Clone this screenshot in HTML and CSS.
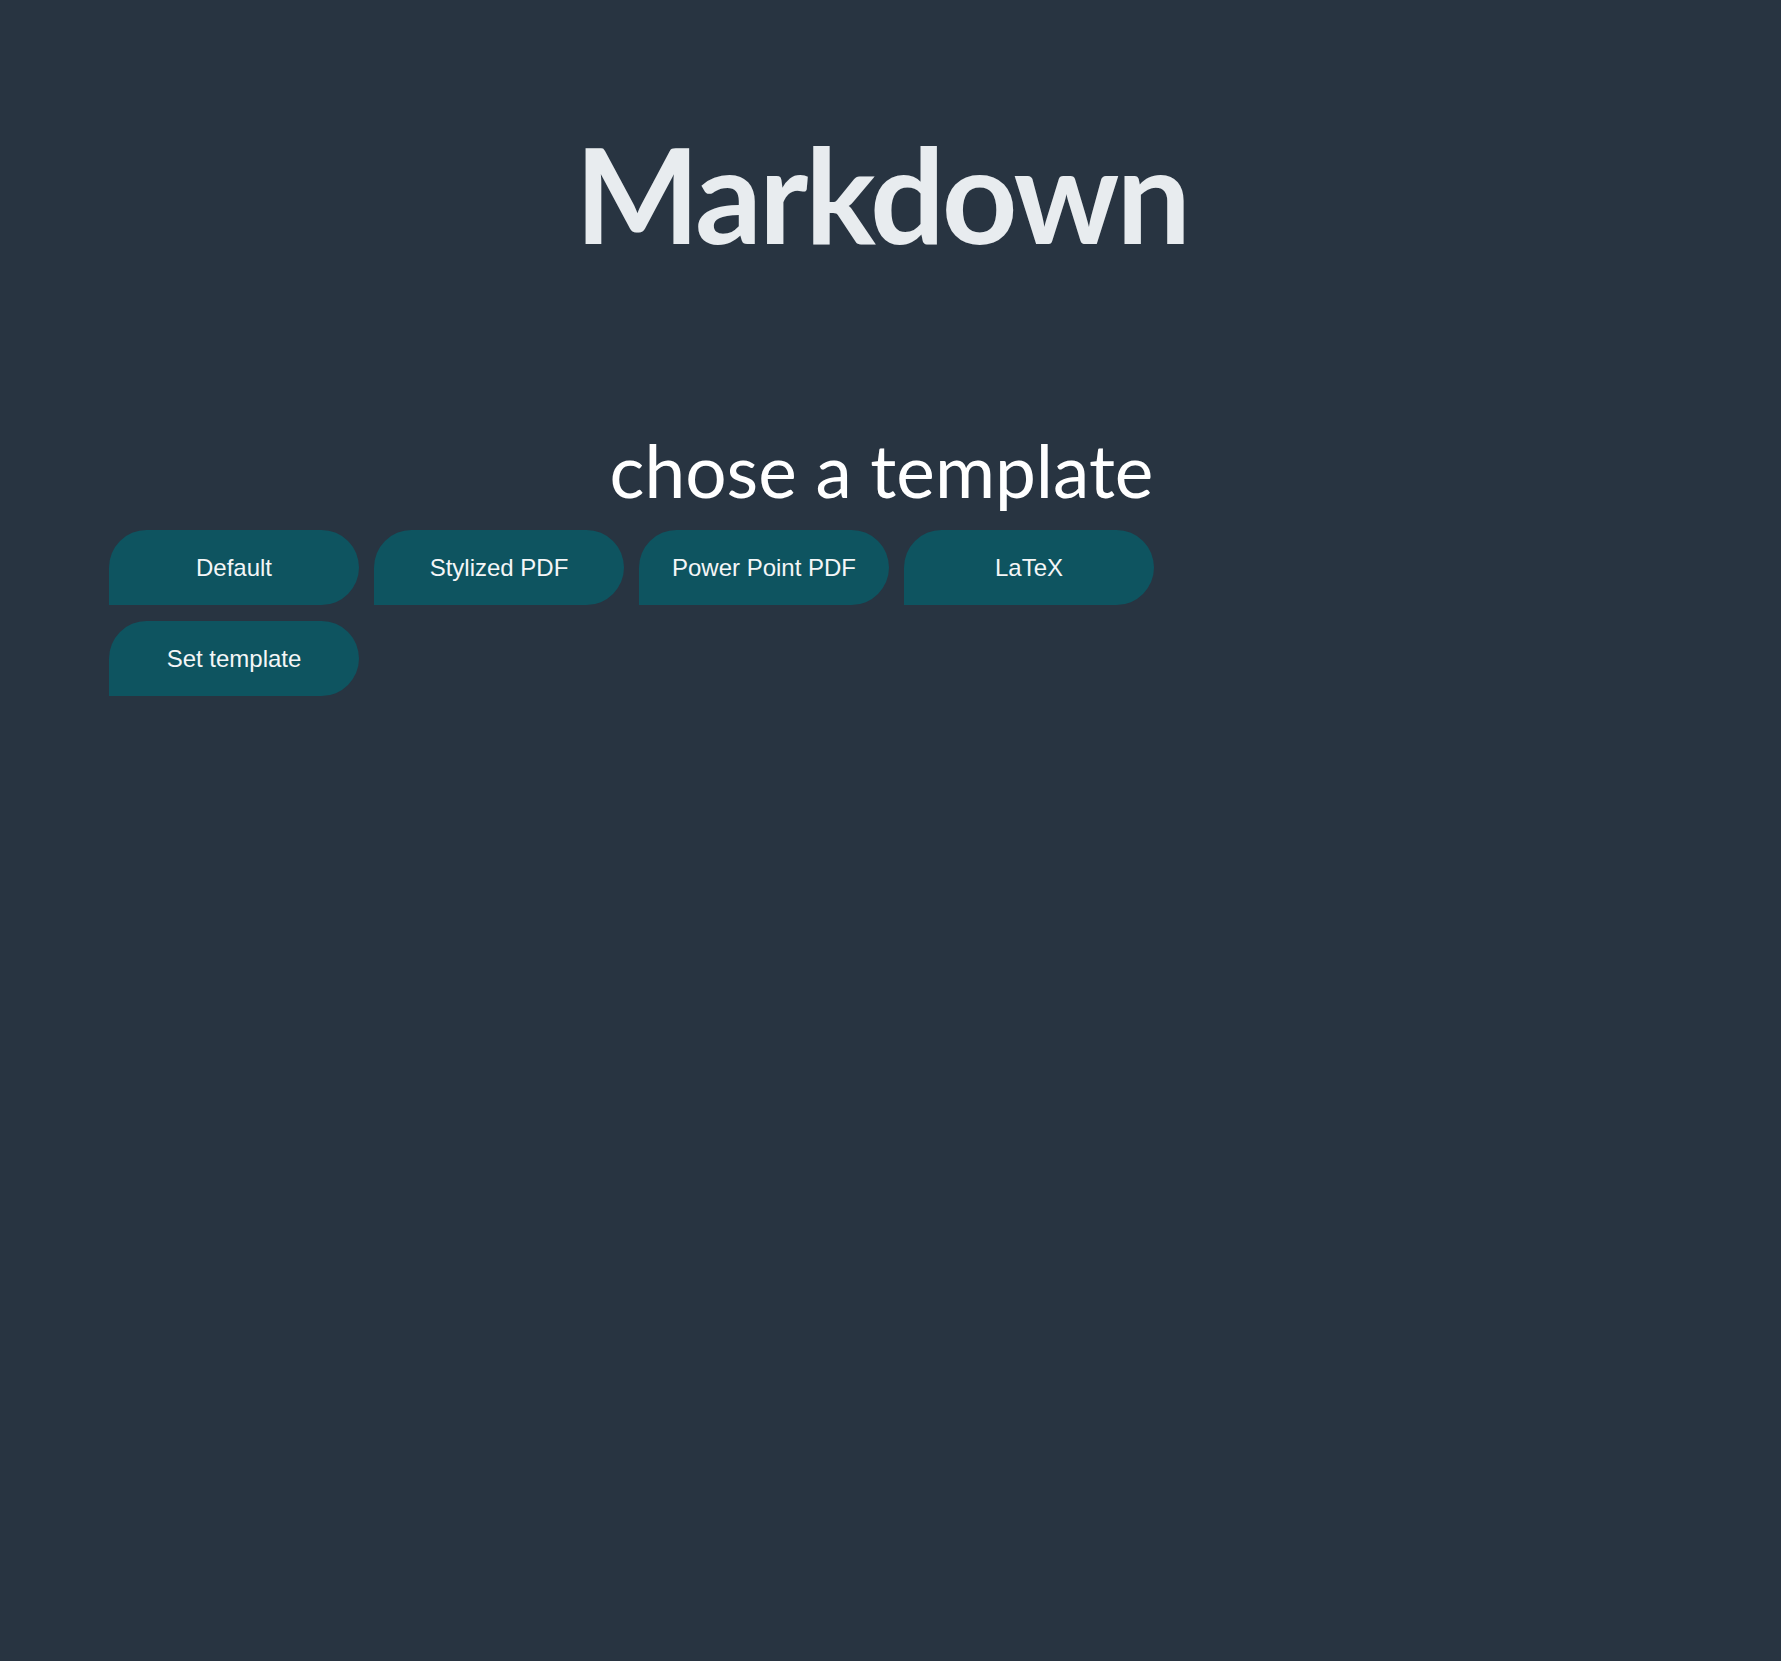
FILE: index.html
```html
<!DOCTYPE html>
<html lang="en">
<head>
<meta charset="utf-8">
<title>Markdown</title>
<link rel="stylesheet" href="styles.css">
</head>
<body>
<main class="page">
  <header class="hero">
    <h1 class="title">Markdown</h1>
  </header>
  <section class="chooser">
    <h2 class="subtitle">chose a template</h2>
    <div class="options">
      <button class="pill">Default</button>
      <button class="pill">Stylized PDF</button>
      <button class="pill">Power Point PDF</button>
      <button class="pill">LaTeX</button>
    </div>
    <div class="actions">
      <button class="pill">Set template</button>
    </div>
  </section>
</main>
</body>
</html>
```

FILE: styles.css
```css
html, body {
  margin: 0;
  padding: 0;
  background: #283441;
  min-height: 100%;
}
body {
  padding: 8px;
  font-family: "Liberation Sans", Arial, sans-serif;
}
.page {
  display: flex;
  flex-direction: column;
}
.hero {
  display: flex;
  justify-content: center;
  padding-right: 18px;
  padding-top: 105px;
}
.title {
  margin: 0;
  font-family: Lato, "Open Sans", sans-serif;
  font-weight: 700;
  font-size: 132px;
  line-height: 160px;
  letter-spacing: -3px;
  color: #e8ecef;
}
.chooser {
  display: flex;
  flex-direction: column;
  padding-top: 157px;
  padding-left: 101px;
}
.subtitle {
  margin: 0 0 20px 0;
  padding-right: 119px;
  text-align: center;
  font-family: Lato, "Open Sans", sans-serif;
  font-weight: 400;
  font-size: 73px;
  line-height: 80px;
  color: #ffffff;
}
.options, .actions {
  display: flex;
  gap: 15px;
}
.actions {
  margin-top: 16px;
}
.pill {
  width: 250px;
  height: 75px;
  border: none;
  border-radius: 38px 38px 38px 0;
  background: #0e5460;
  color: #f4f6f7;
  font-family: "Liberation Sans", Arial, sans-serif;
  font-size: 24px;
  padding: 0;
  cursor: pointer;
}
```
